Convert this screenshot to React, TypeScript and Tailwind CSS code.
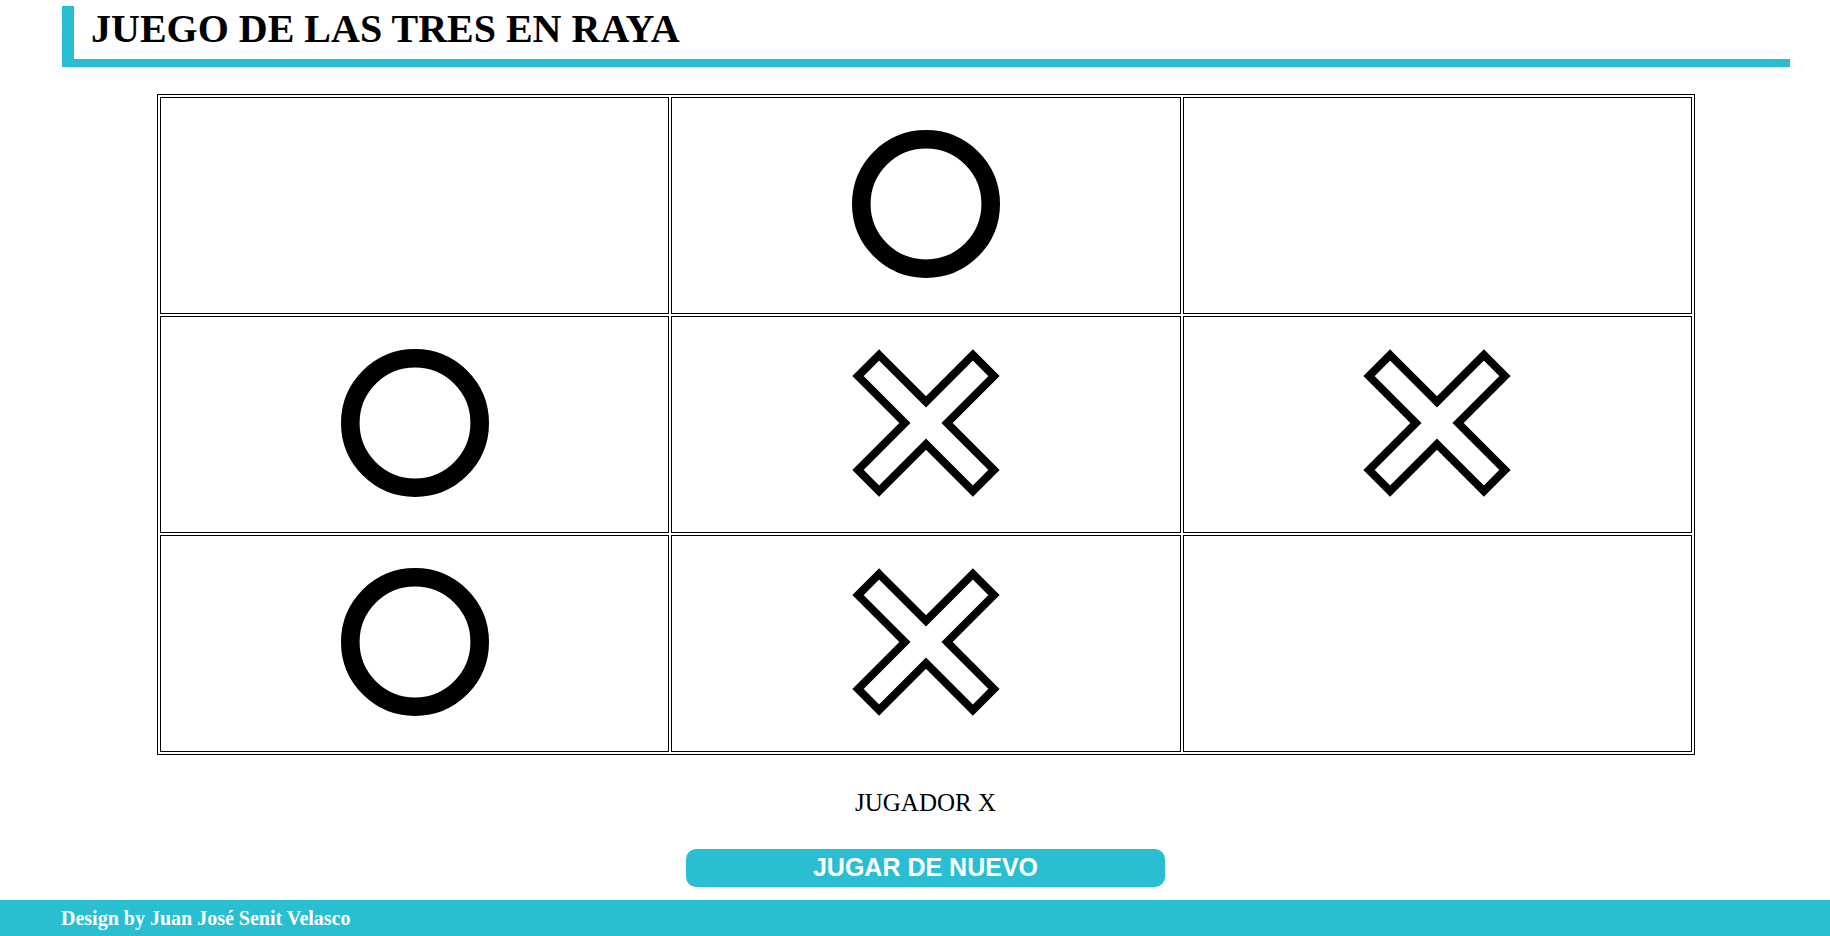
const board: ("X" | "O" | "")[] = ["", "O", "", "O", "X", "X", "O", "X", ""];

function CircleMark() {
  return (
    <svg width="148" height="148" viewBox="0 0 148 148">
      <circle cx="74" cy="74" r="64.7" fill="none" stroke="#000" strokeWidth="18.6" />
    </svg>
  );
}

function CrossMark() {
  return (
    <svg width="148" height="148" viewBox="0 0 148 148">
      <polygon
        points="27.1,6 74,52.9 120.9,6 142,27.1 95.1,74 142,120.9 120.9,142 74,95.1 27.1,142 6,120.9 52.9,74 6,27.1"
        fill="none"
        stroke="#000"
        strokeWidth="8"
        strokeLinejoin="miter"
      />
    </svg>
  );
}

export default function App() {
  return (
    <div className="h-screen flex flex-col bg-white text-black font-['Liberation_Serif','Times_New_Roman',serif] overflow-hidden">
      {/* Cabecera */}
      <header className="mt-[6px] ml-[62px] w-[1728px] border-l-[12px] border-b-[8px] border-[#29bed2] pl-[17px] pb-[8px]">
        <h1 className="text-[40px] leading-[45px] font-bold whitespace-nowrap">JUEGO DE LAS TRES EN RAYA</h1>
      </header>

      {/* Tablero */}
      <div className="mt-[27px] ml-[157px] w-[1538px] border border-black p-[2px] grid grid-cols-3 gap-[2px]">
        {board.map((cell, i) => (
          <div key={i} className="h-[217px] border border-black flex items-center justify-center pb-[4px]">
            {cell === "O" && <CircleMark />}
            {cell === "X" && <CrossMark />}
          </div>
        ))}
      </div>

      <div className="mt-[33px] pl-[21px] flex justify-center">
        <p className="text-[25px] leading-[30px]">JUGADOR X</p>
      </div>

      <div className="mt-[31px] pl-[21px] flex justify-center">
        <button className="w-[479px] h-[38px] rounded-[10px] bg-[#29bed2] text-white text-[25px] font-bold font-['Liberation_Sans',Arial,sans-serif] flex items-center justify-center">
          JUGAR DE NUEVO
        </button>
      </div>

      <footer className="mt-auto h-[36px] bg-[#29bed2] flex items-center pl-[61px] text-white text-[20px] font-bold">
        Design by Juan José Senit Velasco
      </footer>
    </div>
  );
}
